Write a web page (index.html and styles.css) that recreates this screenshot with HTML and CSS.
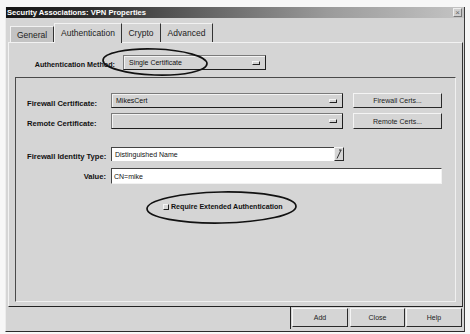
FILE: index.html
```html
<!DOCTYPE html>
<html>
<head>
<meta charset="utf-8">
<link rel="stylesheet" href="styles.css">
</head>
<body>
<div class="window">
  <div class="titlebar">
    <span class="title">Security Associations: VPN Properties</span>
    <span class="close">×</span>
  </div>
  <div class="body">
    <div class="tabs">
      <div class="tab tab-general">General</div>
      <div class="tab tab-active">Authentication</div>
      <div class="tab tab-crypto">Crypto</div>
      <div class="tab tab-adv">Advanced</div>
    </div>
    <div class="panel">
      <div class="auth-row">
        <span class="auth-label">Authentication Method:</span>
        <div class="option auth-option"><span>Single Certificate</span><i class="ind"></i></div>
      </div>
      <div class="group">
        <div class="row row1">
          <span class="label">Firewall Certificate:</span>
          <div class="option field-w"><span>MikesCert</span><i class="ind"></i></div>
          <div class="btn side-btn">Firewall Certs...</div>
        </div>
        <div class="row row2">
          <span class="label">Remote Certificate:</span>
          <div class="option field-w"><span></span><i class="ind"></i></div>
          <div class="btn side-btn">Remote Certs...</div>
        </div>
        <div class="row row3">
          <span class="label">Firewall Identity Type:</span>
          <div class="combo">
            <div class="combo-text">Distinguished Name</div>
            <div class="combo-btn"><svg width="8" height="12" viewBox="0 0 8 12"><path d="M2 10.5 L6 2 M4 2 H6.5" stroke="#333" stroke-width="1" fill="none"/></svg></div>
          </div>
        </div>
        <div class="row row4">
          <span class="label label-right">Value:</span>
          <div class="text-field">CN=mike</div>
        </div>
        <div class="check-row">
          <i class="checkbox"></i>
          <span class="check-label">Require Extended Authentication</span>
        </div>
      </div>
    </div>
  </div>
  <div class="footer">
    <div class="default-frame"><div class="btn foot-btn">Add</div></div>
    <div class="btn foot-btn btn-close">Close</div>
    <div class="btn foot-btn btn-help">Help</div>
  </div>
</div>
<svg class="marks" width="470" height="334" viewBox="0 0 470 334">
  <ellipse cx="155" cy="62" rx="52" ry="13" transform="rotate(2 155 62)" fill="none" stroke="#111" stroke-width="1.7"/>
  <ellipse cx="221.5" cy="207.5" rx="74.5" ry="15.5" transform="rotate(-1 221.5 207.5)" fill="none" stroke="#111" stroke-width="1.7"/>
</svg>
</body>
</html>
```
FILE: styles.css
```css
* { box-sizing: border-box; }
body {
  margin: 0;
  background: #f7f7f7;
  font-family: "Liberation Sans", Arial, sans-serif;
  color: #111;
  position: relative;
  width: 470px;
  height: 334px;
  overflow: hidden;
}
.window {
  margin: 7px 0 0 5px;
  width: 460px;
  height: 325px;
  background: #d5d5d5;
  border-left: 1px solid #ececec;
  border-right: 1px solid #3a3a3a;
  border-bottom: 1px solid #2a2a2a;
  display: flex;
  flex-direction: column;
}
.titlebar {
  height: 11px;
  flex: none;
  display: flex;
  align-items: center;
  justify-content: space-between;
  padding: 0 2px 0 1px;
  background: linear-gradient(90deg, #151515 0%, #2c2c2c 18%, #606060 42%, #9a9a9a 70%, #c4c4c4 100%);
  color: #fff;
  font-weight: bold;
  font-size: 7.6px;
  line-height: 11px;
}
.close {
  width: 9px;
  height: 9px;
  background: #cfcfcf;
  border-top: 1px solid #eee;
  border-left: 1px solid #eee;
  border-right: 1px solid #777;
  border-bottom: 1px solid #777;
  color: #666;
  font-weight: normal;
  font-size: 8px;
  line-height: 7px;
  text-align: center;
}
.body {
  flex: none;
  padding: 5px 1px 0 2px;
  display: flex;
  flex-direction: column;
}
.tabs {
  display: flex;
  align-items: flex-end;
  height: 19px;
  padding-left: 2px;
  font-size: 8.5px;
}
.tab {
  height: 19px;
  display: flex;
  align-items: center;
  justify-content: center;
  border-top: 1px solid #f2f2f2;
  border-left: 1px solid #f2f2f2;
  border-right: 1px solid #333;
  color: #222;
}
.tab-general {
  width: 44px;
  height: 16px;
  background: #c3c3c3;
  padding-top: 1px;
}
.tab-active {
  width: 68px;
  height: 20px;
  margin-bottom: -1px;
  background: #d5d5d5;
  position: relative;
  z-index: 1;
  padding-bottom: 1px;
}
.tab-crypto { width: 39px; border-left: none; }
.tab-adv { width: 52px; border-left: none; }
.panel {
  height: 265px;
  width: 455px;
  border-top: 1px solid #f2f2f2;
  border-left: 1px solid #f2f2f2;
  border-right: 1px solid #333;
  border-bottom: 1px solid #222;
  display: flex;
  flex-direction: column;
}
.auth-row {
  display: flex;
  align-items: center;
  margin-top: 12px;
  height: 15px;
  gap: 8px;
}
.auth-label {
  width: 106px;
  text-align: right;
  font-weight: bold;
  font-size: 7.2px;
  padding-top: 4px;
}
.option {
  height: 15px;
  display: flex;
  align-items: center;
  justify-content: space-between;
  background: #d3d3d3;
  border-top: 1px solid #7a7a7a;
  border-left: 1px solid #7a7a7a;
  border-right: 1px solid #1e1e1e;
  border-bottom: 1px solid #1e1e1e;
  box-shadow: inset 1px 1px 0 #f3f3f3;
  font-size: 7px;
  padding: 0 5px 0 4px;
}
.auth-option { width: 143px; padding-left: 5px; }
.ind {
  width: 8px;
  height: 4px;
  background: #d3d3d3;
  border-top: 1px solid #f5f5f5;
  border-left: 1px solid #f5f5f5;
  border-right: 1px solid #222;
  border-bottom: 1px solid #222;
}
.group {
  margin: 7px 6px 4px 6px;
  height: 225px;
  border-top: 1px solid #4a4a4a;
  border-left: 1px solid #4a4a4a;
  border-right: 1px solid #f0f0f0;
  border-bottom: 1px solid #f0f0f0;
  padding: 15px 0 0 11px;
  display: flex;
  flex-direction: column;
}
.row {
  display: flex;
  align-items: center;
}
.row1 { height: 15px; }
.row2 { height: 16px; margin-top: 5px; }
.row3 { height: 14px; margin-top: 18px; }
.row4 { height: 16px; margin-top: 7px; }
.label {
  width: 84px;
  flex: none;
  font-weight: bold;
  font-size: 7.6px;
  padding-top: 5px;
}
.label-right {
  text-align: right;
  padding-right: 5px;
  padding-top: 1px;
}
.field-w { width: 232px; height: 100%; }
.btn {
  display: flex;
  align-items: center;
  justify-content: center;
  background: #d5d5d5;
  border-top: 1px solid #f4f4f4;
  border-left: 1px solid #f4f4f4;
  border-right: 1px solid #2a2a2a;
  border-bottom: 1px solid #2a2a2a;
  font-size: 7px;
  color: #222;
}
.side-btn {
  width: 89px;
  height: 100%;
  margin-left: 10px;
}
.combo {
  width: 233px;
  height: 14px;
  display: flex;
}
.combo-text {
  flex: 1;
  background: #fff;
  border-top: 1px solid #444;
  border-left: 1px solid #444;
  font-size: 7px;
  padding-left: 3px;
  display: flex;
  align-items: center;
}
.combo-btn {
  width: 10px;
  height: 14px;
  background: #d5d5d5;
  border-top: 1px solid #f4f4f4;
  border-left: 1px solid #f4f4f4;
  border-right: 1px solid #2a2a2a;
  border-bottom: 1px solid #2a2a2a;
  display: flex;
  align-items: center;
  justify-content: center;
}
.text-field {
  width: 331px;
  height: 16px;
  background: #fff;
  border-top: 1px solid #444;
  border-left: 1px solid #444;
  border-right: 1px solid #f2f2f2;
  border-bottom: 1px solid #f2f2f2;
  font-size: 7px;
  padding-left: 2px;
  display: flex;
  align-items: center;
}
.check-row {
  margin-top: 17px;
  height: 12px;
  margin-left: 136px;
  display: flex;
  align-items: center;
  gap: 2px;
}
.checkbox {
  width: 6px;
  height: 6px;
  background: #d5d5d5;
  border-top: 1px solid #f4f4f4;
  border-left: 1px solid #f4f4f4;
  border-right: 1px solid #222;
  border-bottom: 1px solid #222;
}
.check-label {
  font-weight: bold;
  font-size: 7.1px;
}
.footer {
  height: 24px;
  display: flex;
  justify-content: flex-end;
  align-items: flex-start;
  padding-right: 2px;
}
.default-frame {
  border-left: 1px solid #222;
  height: 22px;
  padding: 1px 0 0 1px;
}
.foot-btn {
  width: 56px;
  height: 19px;
}
.btn-close { width: 55px; margin: 1px 0 0 2px; }
.btn-help { width: 56px; margin: 1px 0 0 1px; }
.marks {
  position: absolute;
  left: 0;
  top: 0;
  pointer-events: none;
}
```
